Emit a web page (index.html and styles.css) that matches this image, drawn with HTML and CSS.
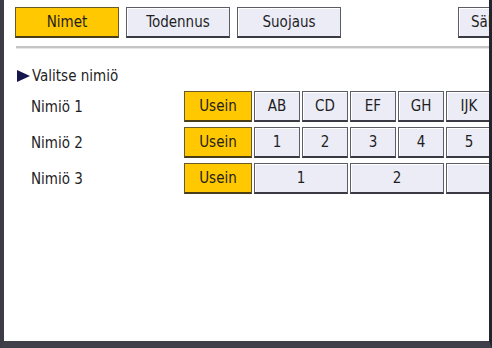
FILE: index.html
```html
<!DOCTYPE html>
<html lang="fi">
<head>
    <meta charset="UTF-8">
    <meta name="viewport" content="width=device-width, initial-scale=1.0">
    <title>Nimet</title>
    <link rel="stylesheet" href="styles.css">
</head>
<body>
    <div class="screen">
        <!-- välilehdet -->
        <div class="tabs">
            <a href="javascript:;" class="tab active">Nimet</a>
            <a href="javascript:;" class="tab">Todennus</a>
            <a href="javascript:;" class="tab">Suojaus</a>
            <a href="javascript:;" class="tab far">Sähköposti</a>
        </div>
        <div class="rule"></div>
        <div class="section">
            <div class="heading"><span class="arrow"></span>Valitse nimiö</div>
            <div class="row">
                <span class="label">Nimiö 1</span>
                <a href="javascript:;" class="key freq">Usein</a>
                <a href="javascript:;" class="key">AB</a>
                <a href="javascript:;" class="key">CD</a>
                <a href="javascript:;" class="key">EF</a>
                <a href="javascript:;" class="key">GH</a>
                <a href="javascript:;" class="key">IJK</a>
            </div>
            <div class="row">
                <span class="label">Nimiö 2</span>
                <a href="javascript:;" class="key freq">Usein</a>
                <a href="javascript:;" class="key">1</a>
                <a href="javascript:;" class="key">2</a>
                <a href="javascript:;" class="key">3</a>
                <a href="javascript:;" class="key">4</a>
                <a href="javascript:;" class="key">5</a>
            </div>
            <div class="row">
                <span class="label">Nimiö 3</span>
                <a href="javascript:;" class="key freq">Usein</a>
                <a href="javascript:;" class="key wide">1</a>
                <a href="javascript:;" class="key wide">2</a>
                <a href="javascript:;" class="key wide">3</a>
            </div>
        </div>
    </div>
</body>
</html>
```

FILE: styles.css
```css
body{
    margin: 0;
    font-family: "DejaVu Sans Condensed", "Liberation Sans", sans-serif;
    color: #1e1e1e;
}
.screen{
    width: 492px;
    height: 348px;
    box-sizing: border-box;
    border-left: 4px solid #3c3c46;
    border-right: 3px solid #24242c;
    border-bottom: 7px solid #40404a;
    background-color: #fff;
    overflow: hidden;
}
.tabs{
    display: flex;
    gap: 7px;
    padding: 7px 0 0 11px;
    white-space: nowrap;
}
.tab{
    flex: none;
    width: 104px;
    height: 31px;
    box-sizing: border-box;
    display: flex;
    align-items: center;
    justify-content: center;
    font-size: 15px;
    color: #1e1e1e;
    text-decoration: none;
    background-color: #ececf7;
    border: 1px solid #5c5c66;
    border-bottom: 2px solid #3a3a42;
    box-shadow: inset 1px 1px 0 #fff;
}
.tab.active{
    background-color: #ffc800;
    border-color: #6a5a28;
    border-bottom-color: #4a3e18;
    box-shadow: none;
}
.tab.far{
    margin-left: 110px;
    justify-content: flex-start;
    padding-left: 12px;
}
.rule{
    margin: 8px 0 0 12px;
    height: 2px;
    background-color: #c4c4c4;
    border-bottom: 1px solid #e6e6e6;
}
.heading{
    display: flex;
    align-items: center;
    height: 20px;
    margin: 17px 0 0 13px;
    font-size: 15px;
}
.arrow{
    width: 0;
    height: 0;
    margin-right: 2px;
    border-top: 6px solid transparent;
    border-bottom: 6px solid transparent;
    border-left: 13px solid #16164e;
}
.row{
    display: flex;
    gap: 2px;
    height: 31px;
    margin-top: 5px;
    white-space: nowrap;
}
.label{
    flex: none;
    width: 178px;
    box-sizing: border-box;
    padding-left: 27px;
    display: flex;
    align-items: center;
    font-size: 15px;
}
.key{
    flex: none;
    width: 46px;
    box-sizing: border-box;
    display: flex;
    align-items: center;
    justify-content: center;
    font-size: 15px;
    color: #1e1e1e;
    text-decoration: none;
    background-color: #ececf7;
    border: 1px solid #5c5c66;
    border-bottom: 2px solid #3a3a42;
    box-shadow: inset 1px 1px 0 #fff;
}
.key.freq{
    width: 68px;
    background-color: #ffc800;
    border-color: #6a5a28;
    border-bottom-color: #4a3e18;
    box-shadow: none;
}
.key.wide{
    width: 94px;
}
```
